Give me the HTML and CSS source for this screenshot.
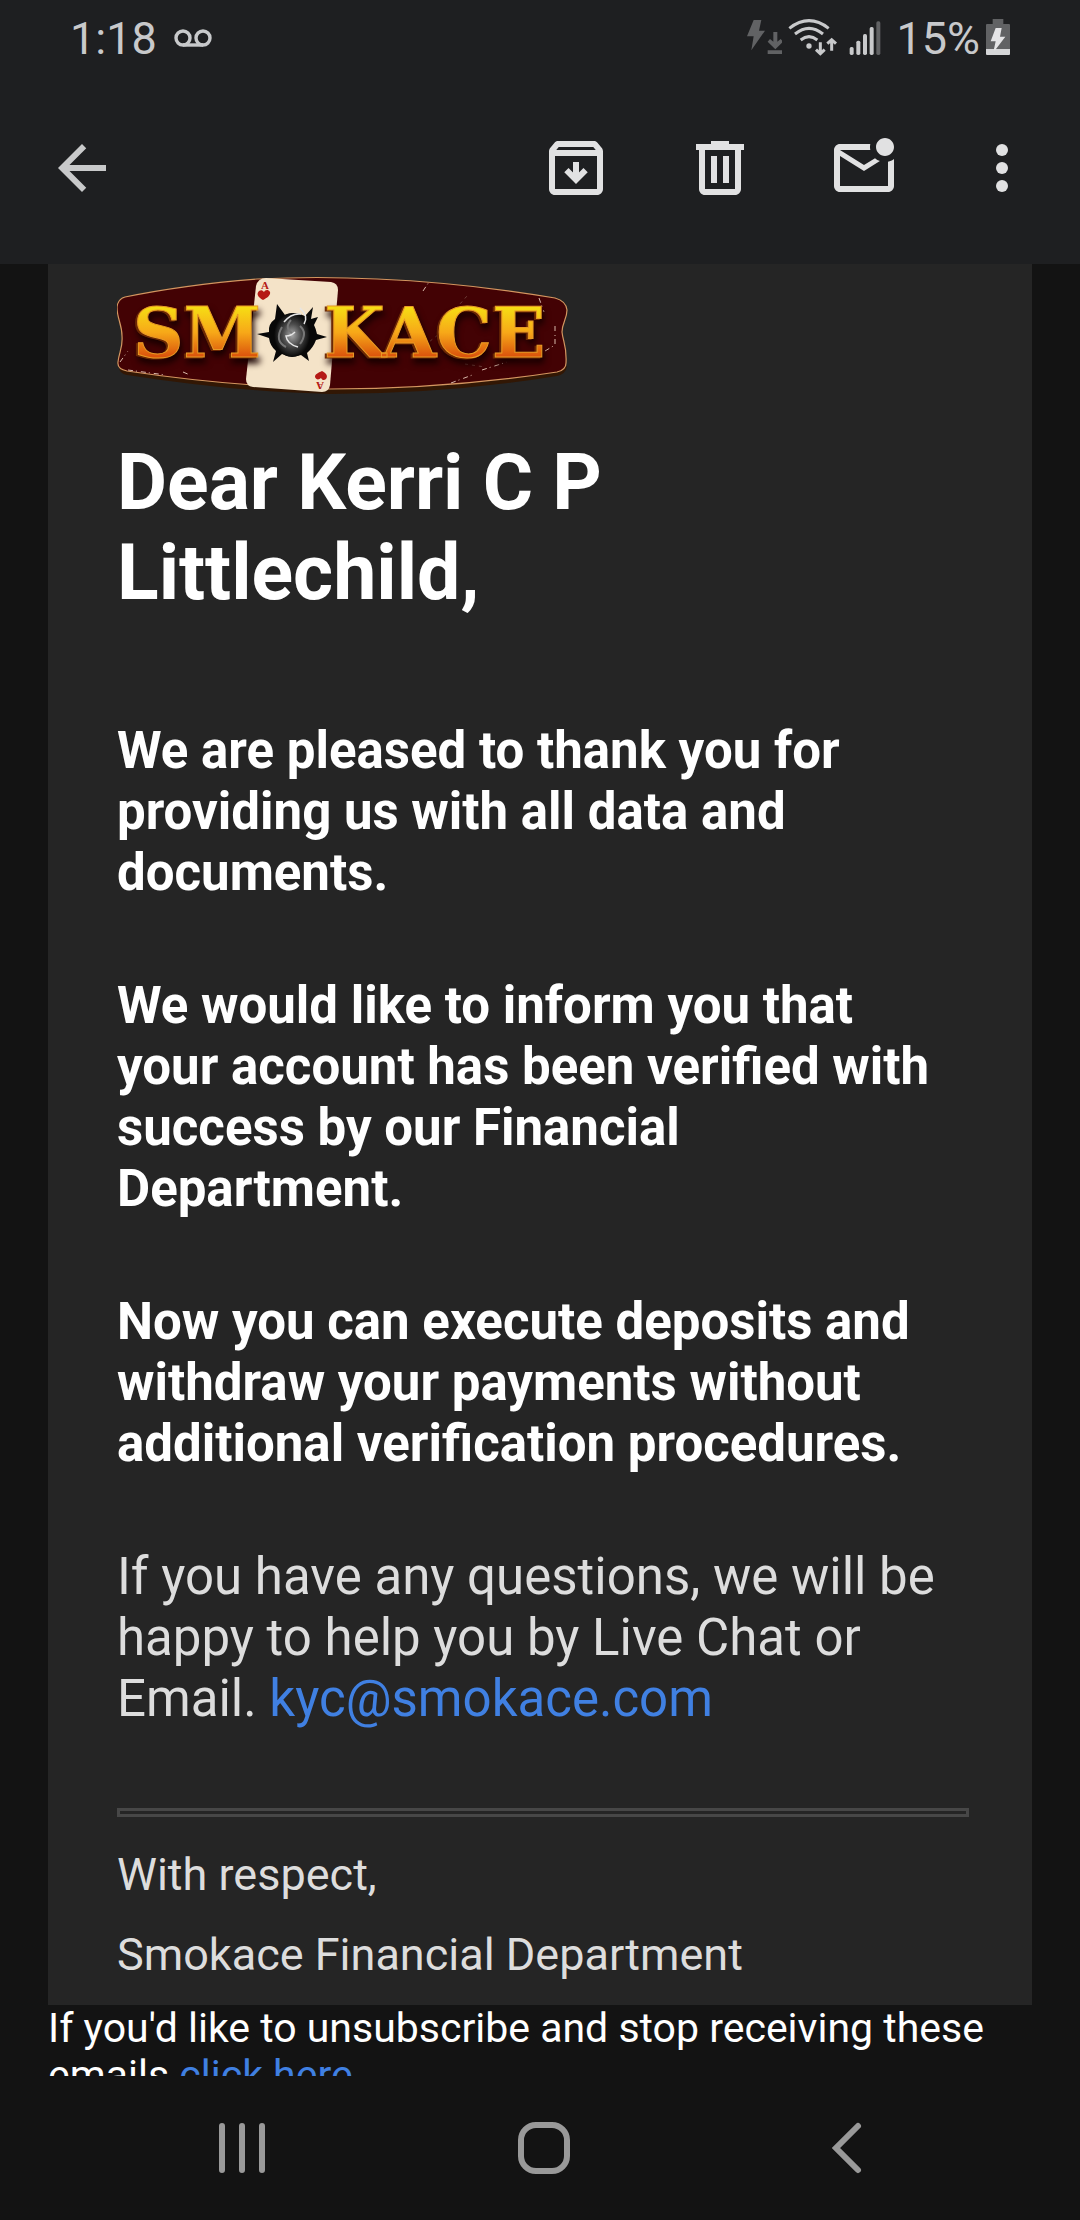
FILE: index.html
```html
<!DOCTYPE html>
<html lang="en">
<head>
    <meta charset="UTF-8">
    <meta name="viewport" content="width=device-width, initial-scale=1.0">
    <title>Smokace Financial Department</title>
    <link rel="stylesheet" href="styles.css">
</head>
<body>
    <header class="header">
        <div class="status-bar">
            <span>1:18</span>
            <svg class="voicemail" viewBox="0 0 38 18" width="38" height="18" fill="none" stroke="#c8c9cb" stroke-width="3.4">
                <circle cx="9" cy="9" r="7"/>
                <circle cx="29" cy="9" r="7"/>
                <path d="M9 16h20"/>
            </svg>
            <div class="status-icons">
                <svg viewBox="50 57 108 114" width="36" height="38" fill="#616264">
                    <path d="M73 60h23l-7 32h18L66 151l7-42H53z"/>
                    <path d="M132 96h12v29l10-8 7 8-23 23-23-23 7-8 10 8zM115 151h45v11h-45z"/>
                </svg>
                <svg viewBox="178 57 162 114" width="54" height="38" fill="none" stroke="#c8c9cb" stroke-width="9">
                    <path d="M182 85q59-46 118 0M199 102q42-34 84 0M216 120q25-20 50 0"/>
                    <circle cx="241" cy="138" r="8" fill="#c8c9cb" stroke="none"/>
                    <path d="M275 127v32M262 149l13 12 13-12M309 152v-32M296 131l13-12 13 12"/>
                </svg>
                <svg viewBox="357 57 126 114" width="42" height="38" fill="#c8c9cb">
                    <rect x="362" y="141" width="12" height="24" rx="5"/>
                    <rect x="382" y="122" width="12" height="43" rx="5"/>
                    <rect x="402" y="102" width="12" height="63" rx="5"/>
                    <rect x="422" y="81" width="12" height="84" rx="5"/>
                    <rect x="442" y="64" width="12" height="101" rx="5" fill="#616264"/>
                </svg>
                <span>15%</span>
                <svg viewBox="768 57 72 114" width="24" height="38">
                    <path d="M788 57h32v15h17q3 0 3 3v72h-72V75q0-3 3-3h17z" fill="#616264"/>
                    <path d="M768 147h72v15q0 3-3 3h-66q-3 0-3-3z" fill="#d5d6d8"/>
                    <path d="M797 84h18l-5 26h16l-32 42-2-5 5-23h-15z" fill="#e4e4e6"/>
                </svg>
            </div>
        </div>
        <div class="toolbar">
            <button class="icon-button back-arrow" aria-label="Back">
                <svg viewBox="0 0 24 24"><path d="M20 11H7.83l5.59-5.59L12 4l-8 8 8 8 1.41-1.41L7.83 13H20v-2z"/></svg>
            </button>
            <div class="actions">
                <button class="icon-button" aria-label="Archive">
                    <svg viewBox="0 0 24 24">
                        <path d="M20.54 5.23l-1.39-1.68C18.88 3.21 18.47 3 18 3H6c-.47 0-.88.21-1.16.55L3.46 5.23C3.17 5.57 3 6.02 3 6.5V19c0 1.1.9 2 2 2h14c1.1 0 2-.9 2-2V6.5c0-.48-.17-.93-.46-1.27zM6.24 5h11.52l.83 1H5.42l.82-1zM5 19V8h14v11H5z"/>
                        <path d="M12 10v5.9M8.8 12.7l3.2 3.2 3.2-3.2" fill="none" stroke="currentColor" stroke-width="2"/>
                    </svg>
                </button>
                <button class="icon-button" aria-label="Delete">
                    <svg viewBox="0 0 24 24"><path fill-rule="evenodd" d="M9 3h6v1h5v2h-1v13c0 1.1-.9 2-2 2H7c-1.1 0-2-.9-2-2V6H4V4h5zM7 6v13h10V6zM9 8h2v9H9zM13 8h2v9h-2z"/></svg>
                </button>
                <button class="icon-button" aria-label="Mark as unread">
                    <svg viewBox="0 0 24 24"><path d="M22 8.98V18c0 1.1-.9 2-2 2H4c-1.1 0-2-.9-2-2V6c0-1.1.9-2 2-2h10.1c-.06.32-.1.66-.1 1s.04.68.1 1H4l8 5 3.67-2.29c.47.43 1.02.76 1.63.98L12 13 4 8v10h16V9.9c.74-.15 1.42-.48 2-.92zM16 5c0 1.66 1.34 3 3 3s3-1.34 3-3-1.34-3-3-3-3 1.34-3 3z"/></svg>
                </button>
                <button class="icon-button more" aria-label="More options">
                    <svg viewBox="0 0 24 24"><circle cx="12" cy="6" r="2"/><circle cx="12" cy="12" r="2"/><circle cx="12" cy="18" r="2"/></svg>
                </button>
            </div>
        </div>
    </header>

    <main class="message">
        <article class="card">
            <svg class="logo" viewBox="0 0 452 120" width="452" height="120" role="img" aria-label="Smokace">
                <defs>
                    <linearGradient id="gold" x1="0" y1="0" x2="0" y2="1">
                        <stop offset="0.2" stop-color="#f6dc14"/>
                        <stop offset="0.5" stop-color="#f7a818"/>
                        <stop offset="0.8" stop-color="#d9500c"/>
                    </linearGradient>
                    <radialGradient id="smoke">
                        <stop offset="0" stop-color="#a8a8a8"/>
                        <stop offset="0.5" stop-color="#4c4c4c"/>
                        <stop offset="1" stop-color="#080808"/>
                    </radialGradient>
                </defs>
                <!-- plate -->
                <path d="M2 90Q2 98 10 99Q120 116 213 118Q330 118 440 100Q449 98 450 90" fill="#321704"/>
                <path d="M8 21Q66 9 140 3Q200 0 260 3Q350 7 438 22Q449 25 450 34C450 43 445 47 445 56C446 66 450 70 449 87Q449 94 440 96Q330 113 213 113Q110 110 10 95Q0 93 1 86C2 76 6 72 5 60C5 48 0 43 0 31Q1 23 8 21Z" fill="#430204" stroke="#d39660" stroke-width="1.2"/>
                <path d="M3 86l8-11M11 94l38 5M66 96l7 3M334 107l24-9M365 94l25-8M428 75l10-6M438 68v-18M422 22l5 14M306 15l6-9" fill="none" stroke="#d8b9aa" stroke-dasharray="5 3 1 4"/>
                <path d="M320 54L350 20M302 74l25-20M348 88l20 3" stroke="#70403a" fill="none" stroke-dasharray="3 4"/>
                <!-- ace of hearts -->
                <path d="M149 2L214 6Q221 7 221 14L213 109Q212 116 205 116L136 111Q129 110 129 103L139 10Q141 2 149 2Z" fill="#f4e3c8"/>
                <path d="M146 24c-5-3-7-6-4-9 3-2 4 0 5 1 1-2 4-3 6 0 1 3-3 6-7 8zM205 95c5 3 6 5 4 8-2 2-4 1-5-1-2 2-5 2-6-1 0-3 3-4 7-6z" fill="#b51a16"/>
                <text class="card-ace" x="144" y="13">A</text>
                <text class="card-ace" x="-207" y="-106" transform="rotate(180)">A</text>
                <!-- bullet hole -->
                <path d="M160 28L168 39Q178 35 188 40L196 31L194 43L201 41L197 49Q199 53 200 58L210 61L199 64Q196 72 190 77L192 85L184 79Q174 83 165 78L156 86L159 75Q153 70 152 62L140 58L152 56Q151 48 158 43Z" fill="#080808"/>
                <ellipse cx="175" cy="59" rx="18" ry="22" fill="url(#smoke)"/>
                <path d="M181 71Q170 68 169 60Q174 60 178 56M167 46Q174 37 184 38M187 48Q192 40 183 32" fill="none" stroke="#e6e6e6" stroke-width="1.5"/>
                <path d="M165 51q-8 14 4 20M183 50q8 7 0 18M174 44q-7 8 1 13" fill="none" stroke="#777777" stroke-width="2"/>
                <g class="logo-letters" fill="url(#gold)" stroke="#e99b25">
                    <text x="16" y="81">SM</text>
                    <text x="207" y="81">KACE</text>
                </g>
            </svg>
            <h1>Dear Kerri C P Littlechild,</h1>
            <div class="text">
                <p><strong>We are pleased to thank you for providing us with all data and documents.</strong></p>
                <p><strong>We would like to inform you that your account has been verified with success by our Financial Department.</strong></p>
                <p><strong>Now you can execute deposits and withdraw your payments without additional verification procedures.</strong></p>
                <p>If you have any questions, we will be happy to help you by Live Chat or Email. <a href="mailto:kyc@smokace.com">kyc@smokace.com</a></p>
            </div>
            <hr>
            <div class="signature">
                <p>With respect,</p>
                <p>Smokace Financial Department</p>
            </div>
        </article>
        <p class="unsubscribe">If you'd like to unsubscribe and stop receiving these emails <a href="#">click here</a></p>
    </main>

    <nav class="nav-bar">
        <button class="icon-button" aria-label="Recent apps">
            <svg viewBox="0 0 72 72"><path d="M16 14v44M36 14v44M56 14v44"/></svg>
        </button>
        <button class="icon-button" aria-label="Home">
            <svg viewBox="0 0 72 72"><rect x="13" y="13" width="46" height="46" rx="15"/></svg>
        </button>
        <button class="icon-button" aria-label="Back">
            <svg viewBox="0 0 72 72"><path d="M48 14L26 36l22 22"/></svg>
        </button>
    </nav>
</body>
</html>
```

FILE: styles.css
```css
* {
    box-sizing: border-box;
}
body {
    display: flex;
    flex-direction: column;
    height: 100vh;
    margin: 0;
    overflow: hidden;
    font-family: Roboto, sans-serif;
    background-color: #131313;
    color: #dddddd;
}
h1, p {
    margin: 0;
}
a {
    color: #4080e2;
    text-decoration: none;
}
.header {
    flex: none;
    background-color: #1e1f21;
}
.status-bar {
    display: flex;
    align-items: center;
    height: 72px;
    padding: 4px 70px 0;
    font-size: 45px;
    color: #c8c9cb;
}
.voicemail {
    margin-left: 17px;
}
.status-icons {
    display: flex;
    align-items: center;
    gap: 6px;
    margin-left: auto;
}
.toolbar {
    display: flex;
    justify-content: space-between;
    align-items: center;
    height: 192px;
    padding: 0 42px 0 46px;
    color: #e1e1e2;
}
.actions {
    display: flex;
    gap: 72px;
}
.icon-button {
    width: 72px;
    height: 72px;
    padding: 0;
    border: none;
    background: none;
    color: inherit;
    cursor: pointer;
}
.icon-button svg {
    display: block;
    width: 100%;
    height: 100%;
    fill: currentColor;
}
.back-arrow {
    color: #c8c9ca;
}
.more {
    margin-left: -6px;
}
.message {
    flex: 1;
    min-height: 0;
    padding: 0 48px;
    overflow: hidden;
}
.card {
    padding: 12px 63px 24px 69px;
    background-color: #252525;
}
.logo {
    display: block;
    max-width: 100%;
}
.logo-letters {
    font-family: "DejaVu Serif", serif;
    font-size: 70px;
    font-weight: bold;
    filter: drop-shadow(-2px 1px 0 #6b2703) drop-shadow(2px 5px 3px #180000);
}
.card-ace {
    font-family: "Liberation Serif", serif;
    font-size: 11px;
    font-weight: bold;
    fill: #b51a16;
}
h1 {
    margin: 42px 0 102px;
    font-size: 77px;
    line-height: 90px;
    color: #ffffff;
}
.text {
    display: flex;
    flex-direction: column;
    gap: 72px;
    padding-right: 16px;
    font-size: 51px;
    line-height: 61px;
}
.text strong {
    color: #ffffff;
}
hr {
    height: 9px;
    margin: 79px 0 32px;
    border: 3px solid #474747;
}
.signature {
    display: flex;
    flex-direction: column;
    gap: 28px;
    font-size: 45px;
    line-height: 52px;
}
.unsubscribe {
    font-size: 41px;
    line-height: 47px;
    color: #ffffff;
}
.nav-bar {
    display: flex;
    flex: none;
    justify-content: center;
    align-items: center;
    gap: 230px;
    height: 144px;
    padding-left: 8px;
    color: #999999;
}
.nav-bar svg {
    fill: none;
    stroke: currentColor;
    stroke-width: 6;
    stroke-linecap: round;
}
```
